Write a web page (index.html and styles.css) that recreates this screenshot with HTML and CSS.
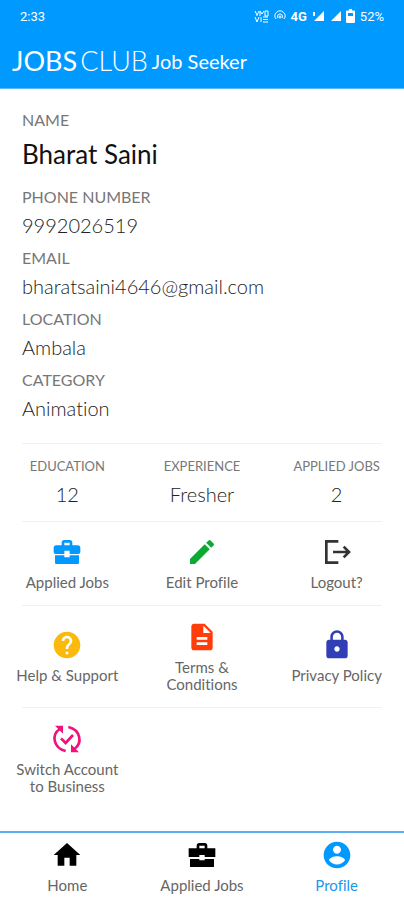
FILE: index.html
```
<!DOCTYPE html>
<html lang="en">
<head>
<meta charset="utf-8">
<meta name="viewport" content="width=device-width, initial-scale=1">
<title>Jobs Club - Profile</title>
<link rel="stylesheet" href="styles.css">
</head>
<body>
<header class="top">
  <div class="status">
    <span class="time">2:33</span>
    <div class="signals">
      <svg class="volte" viewBox="0 0 15 13" aria-hidden="true"><path d="M1 1l2 4 2-4M3 5v1M6 1v5M6 1l2 3 2-3M1 7l2 5 2-5M7 7v5M11 1h3v5h-3zM9 7h5M9 9.500h5M9 12h5"/></svg>
      <svg class="hotspot" viewBox="0 0 12 12" aria-hidden="true"><path d="M2 9a5 5 0 1 1 8 0M4 8a2.500 2.500 0 1 1 4 0"/><circle cx="6" cy="7" r="1"/></svg>
      <span class="net">4G</span>
      <svg class="bars" viewBox="0 0 12 12" aria-hidden="true"><path d="M12 1v10H2zM1 2h2v4H1z"/></svg>
      <svg class="bars" viewBox="0 0 12 12" aria-hidden="true"><path d="M12 1v10H2z"/></svg>
      <svg class="battery" viewBox="0 0 9 14" aria-hidden="true"><path fill-rule="evenodd" d="M3 0h3v1.500h2q1 0 1 1V13q0 1-1 1H1q-1 0-1-1V2.500q0-1 1-1h2zM2 4v3h5V4z"/></svg>
      <span>52%</span>
    </div>
  </div>
  <h1 class="brand"><span class="jobs">JOBS</span><span class="club">CLUB</span><span class="seeker">Job Seeker</span></h1>
</header>
<main class="content">
  <dl class="details">
    <div class="field name"><dt>NAME</dt><dd>Bharat Saini</dd></div>
    <div class="field"><dt>PHONE NUMBER</dt><dd>9992026519</dd></div>
    <div class="field"><dt>EMAIL</dt><dd>bharatsaini4646@gmail.com</dd></div>
    <div class="field"><dt>LOCATION</dt><dd>Ambala</dd></div>
    <div class="field"><dt>CATEGORY</dt><dd>Animation</dd></div>
  </dl>
  <hr>
  <dl class="row stats">
    <div><dt>EDUCATION</dt><dd>12</dd></div>
    <div><dt>EXPERIENCE</dt><dd>Fresher</dd></div>
    <div><dt>APPLIED JOBS</dt><dd>2</dd></div>
  </dl>
  <hr>
  <div class="row actions first">
    <a class="tile" href="#applied"><svg class="icon blue" viewBox="0 0 24 24" aria-hidden="true"><path fill-rule="evenodd" d="M8 7V5q0-2 2-2h4q2 0 2 2v2h4q2 0 2 2v3q0 1.500-1.500 1.500H14V11h-4v2.500H3.500Q2 13.500 2 12V9q0-2 2-2zm2 0h4V5h-4zM3 14.500h7V16h4v-1.500h7V20q0 1-1 1H4q-1 0-1-1z"/></svg><span>Applied Jobs</span></a>
    <a class="tile" href="#edit"><svg class="icon green" viewBox="0 0 24 24" aria-hidden="true"><path d="M3 17.250V21h3.750L17.810 9.940l-3.750-3.750L3 17.250zM20.710 7.040a1 1 0 0 0 0-1.410l-2.340-2.340a1 1 0 0 0-1.410 0l-1.830 1.830 3.750 3.750 1.830-1.830z"/></svg><span>Edit Profile</span></a>
    <button class="tile" type="button"><svg class="icon line" viewBox="0 0 24 24" aria-hidden="true"><path d="M13 4H4v16h9M9 12h12M17 8l4 4-4 4"/></svg><span>Logout?</span></button>
  </div>
  <hr>
  <div class="row actions">
    <a class="tile" href="#help"><svg class="icon amber" viewBox="0 0 24 24" aria-hidden="true"><path d="M12 2C6.480 2 2 6.480 2 12s4.480 10 10 10 10-4.480 10-10S17.520 2 12 2zm1 17h-2v-2h2v2zm2.070-7.750l-.9.920C13.450 12.900 13 13.500 13 15h-2v-.5c0-1.100.45-2.100 1.170-2.830l1.240-1.260c.37-.36.59-.86.59-1.410 0-1.100-.9-2-2-2s-2 .9-2 2H8c0-2.210 1.790-4 4-4s4 1.790 4 4c0 .88-.36 1.680-.93 2.250z"/></svg><span>Help &amp; Support</span></a>
    <a class="tile" href="#terms"><svg class="icon red" viewBox="0 0 24 24" aria-hidden="true"><path d="M14 2H6c-1.100 0-2 .9-2 2v16c0 1.100.9 2 2 2h12c1.100 0 2-.9 2-2V8l-6-6zm2 16H8v-2h8v2zm0-4H8v-2h8v2zm-3-5V3.500L18.500 9H13z"/></svg><span>Terms &amp;<br>Conditions</span></a>
    <a class="tile" href="#privacy"><svg class="icon indigo" viewBox="0 0 24 24" aria-hidden="true"><path d="M18 8h-1V6c0-2.760-2.240-5-5-5S7 3.240 7 6v2H6c-1.100 0-2 .9-2 2v10c0 1.100.9 2 2 2h12c1.100 0 2-.9 2-2V10c0-1.100-.9-2-2-2zm-6 9c-1.100 0-2-.9-2-2s.9-2 2-2 2 .9 2 2-.9 2-2 2zm3.100-9H8.900V6c0-1.710 1.390-3.100 3.100-3.100s3.100 1.390 3.100 3.100v2z"/></svg><span>Privacy Policy</span></a>
  </div>
  <hr>
  <div class="row actions">
    <button class="tile" type="button"><svg class="icon pink" viewBox="0 0 24 24" aria-hidden="true"><path d="M11 21C2 19 0 9 6.500 4.500M13 3c9 2 11 12 4.500 16.500M7.500 11.500l3.500 3.500 5.500-6"/><path class="heads" d="M3 2h6v6zM21 22h-6v-6z"/></svg><span>Switch Account<br>to Business</span></button>
  </div>
</main>
<nav class="tabs">
  <a class="tile" href="#home"><svg class="icon" viewBox="0 0 24 24" aria-hidden="true"><path d="M10 20v-6h4v6h5v-8h3L12 3 2 12h3v8z"/></svg><span>Home</span></a>
  <a class="tile" href="#jobs"><svg class="icon" viewBox="0 0 24 24" aria-hidden="true"><path fill-rule="evenodd" d="M8 7V5q0-2 2-2h4q2 0 2 2v2h6v6.500h-8V12h-4v1.500H2V7zm2 0h4V5h-4zM3 15h7v1h4v-1h7v6H3z"/></svg><span>Applied Jobs</span></a>
  <a class="tile active" href="#profile" aria-current="page"><svg class="icon" viewBox="0 0 24 24" aria-hidden="true"><path d="M12 2C6.480 2 2 6.480 2 12s4.480 10 10 10 10-4.480 10-10S17.520 2 12 2zm0 3c1.660 0 3 1.340 3 3s-1.340 3-3 3-3-1.340-3-3 1.340-3 3-3zm0 14.200c-2.500 0-4.710-1.280-6-3.220.03-1.990 4-3.080 6-3.080 1.990 0 5.970 1.090 6 3.080-1.290 1.940-3.500 3.220-6 3.220z"/></svg><span>Profile</span></a>
</nav>
</body>
</html>
```
FILE: styles.css
```
* { box-sizing: border-box; }
body {
  margin: 0;
  min-height: 100vh;
  display: flex;
  flex-direction: column;
  background: #fff;
  color: #222;
  font-family: Lato, "Open Sans", sans-serif;
  font-weight: 400;
  font-variant-ligatures: none;
}
h1, dl, dd { margin: 0; }
.top {
  background: #0099ff;
  color: #fff;
  border-bottom: 1px solid #5cb8f5;
}
.status {
  display: flex;
  justify-content: space-between;
  align-items: center;
  height: 32px;
  padding: 0 20px;
  font-family: Roboto, sans-serif;
  font-size: 13px;
}
.signals { display: flex; align-items: center; gap: 5px; }
.signals svg { fill: #fff; }
.signals .volte, .signals .hotspot { fill: none; stroke: #fff; }
.volte { width: 15px; height: 13px; }
.hotspot { width: 12px; height: 12px; }
.net { font-weight: 700; }
.bars { width: 12px; height: 12px; }
.battery { width: 9px; height: 14px; }
.brand {
  display: flex;
  align-items: center;
  height: 56px;
  padding: 2px 12px 0;
  font-size: 27px;
  line-height: 34px;
  font-weight: 400;
}
.club { margin-left: 3px; font-weight: 300; }
.seeker { margin-left: 4px; font-size: 20px; }
.content { flex: 1; }
.details { padding: 19px 22px 14px; }
.field dt { font-size: 16px; line-height: 24px; color: #777; }
.field dd { font-size: 20px; line-height: 32px; font-weight: 300; }
.field { margin-bottom: 5px; }
.field.name { margin-bottom: 8px; }
.field.name dd { font-size: 26px; line-height: 45px; font-weight: 400; color: #111; }
hr { width: calc(100% - 44px); margin: 0 22px; border: 0; border-top: 1px solid #f0f0f0; }
.row, .tabs { display: grid; grid-template-columns: repeat(3, 1fr); }
.stats { padding: 11px 0 9px; text-align: center; }
.stats dt { font-size: 13px; line-height: 22px; color: #777; }
.stats dd { font-size: 20px; line-height: 35px; font-weight: 300; }
.tile {
  display: flex;
  flex-direction: column;
  align-items: center;
  justify-content: center;
  gap: 6px;
  padding: 0;
  border: 0;
  background: none;
  color: #666;
  font-family: inherit;
  font-size: 15px;
  line-height: 17px;
  text-align: center;
  text-decoration: none;
}
.actions { min-height: 101px; }
.actions.first { min-height: 83px; }
.icon { width: 32px; height: 32px; fill: currentColor; }
.icon.blue { fill: #0099ff; }
.icon.green { fill: #0bab32; }
.icon.amber { fill: #fbb90b; }
.icon.red { fill: #ff3d0a; }
.icon.indigo { fill: #303fb5; }
.icon.line, .icon.pink { fill: none; stroke: #333; stroke-width: 2; }
.icon.pink { stroke: #f0127a; }
.icon .heads { fill: #f0127a; stroke: none; }
.tabs { border-top: 2px solid #5cb0f2; height: 69px; }
.tabs .icon { fill: #000; }
.tabs .active { color: #1a98ea; }
.tabs .active .icon { fill: #0099ff; }
```
